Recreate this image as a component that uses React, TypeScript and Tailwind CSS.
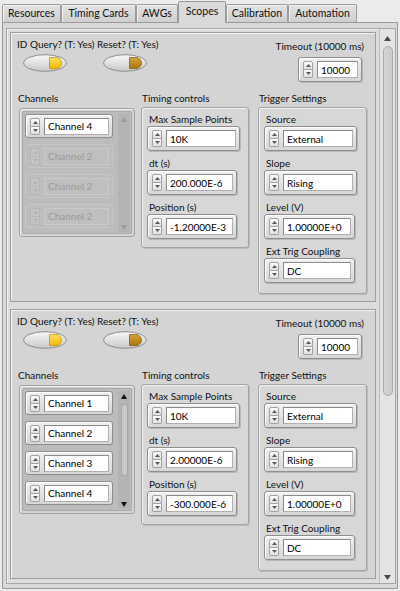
import React from "react";

function Tri({ dir, color, w = 5, h = 3 }: { dir: "up" | "down"; color: string; w?: number; h?: number }) {
  return (
    <svg width={w} height={h} viewBox={`0 0 ${w} ${h}`} className="block">
      <path d={dir === "up" ? `M${w / 2} 0L${w} ${h}H0Z` : `M0 0H${w}L${w / 2} ${h}Z`} fill={color} />
    </svg>
  );
}

function Spinner({ disabled = false }: { disabled?: boolean }) {
  const c = disabled ? "#b2b2b2" : "#5a5a5a";
  const btn = disabled
    ? "border-[#b6b6b6] bg-[#c4c4c4]"
    : "border-[#a2a2a2] bg-gradient-to-b from-[#fbfbfb] to-[#e0e0e0]";
  return (
    <div className="flex flex-col w-[10px] h-[17px] shrink-0">
      <div className={`flex-1 flex items-center justify-center border rounded-t-[2px] ${btn}`}>
        <Tri dir="up" color={c} />
      </div>
      <div className={`flex-1 flex items-center justify-center border border-t-0 rounded-b-[2px] ${btn}`}>
        <Tri dir="down" color={c} />
      </div>
    </div>
  );
}

function NumCtrl({
  value,
  w,
  h = "h-[25px]",
  disabled = false,
}: {
  value: string;
  w: string;
  h?: string;
  disabled?: boolean;
}) {
  return (
    <div
      className={`${w} ${h} shrink-0 flex items-center gap-[4px] pl-[4px] pr-[3px] rounded-[3px] border ${
        disabled
          ? "border-[#c6c6c6] bg-[#bdbdbd]"
          : "border-[#8e8e8e] bg-gradient-to-b from-[#f0f0f0] to-[#d6d6d6] shadow-[inset_1px_1px_0_#ffffff,1px_1px_0_#b8b8b8]"
      }`}
    >
      <Spinner disabled={disabled} />
      <div
        className={`flex-1 h-[17px] border flex items-center pl-[3px] leading-none whitespace-nowrap ${
          disabled
            ? "border-[#cacaca] bg-[#bfbfbf] text-[#9a9a9a]"
            : "border-[#b0b0b0] border-t-[#8a8a8a] border-l-[#8a8a8a] bg-white text-black"
        }`}
      >
        {value}
      </div>
    </div>
  );
}

function Led({ dark = false }: { dark?: boolean }) {
  const id = dark ? "ledDark" : "ledLight";
  return (
    <svg width="44" height="18" viewBox="0 0 44 18" className="block">
      <defs>
        <linearGradient id="ledBody" x1="0" y1="0" x2="0" y2="1">
          <stop offset="0" stopColor="#f8f8f8" />
          <stop offset="1" stopColor="#c9c9c9" />
        </linearGradient>
        <linearGradient id={id} x1="0" y1="0" x2="0" y2="1">
          {dark ? (
            <>
              <stop offset="0" stopColor="#d8a23a" />
              <stop offset="1" stopColor="#a8760e" />
            </>
          ) : (
            <>
              <stop offset="0" stopColor="#ffe060" />
              <stop offset="1" stopColor="#f5b800" />
            </>
          )}
        </linearGradient>
      </defs>
      <ellipse cx="22" cy="9" rx="21.3" ry="8.3" fill="url(#ledBody)" stroke="#8c8c8c" strokeWidth="1" />
      <path
        d="M26.5 3.5H32.5A6 5.5 0 0 1 32.5 14.5H26.5Z"
        fill={`url(#${id})`}
        stroke={dark ? "#8a6010" : "#c89400"}
        strokeWidth="0.8"
      />
    </svg>
  );
}

function Group({ children, w, pb }: { children: React.ReactNode; w: string; pb: string }) {
  return (
    <div
      className={`${w} ${pb} mt-[2px] rounded-[3px] border border-[#a4a4a4] bg-[#d7d7d7] shadow-[inset_1px_1px_0_#f2f2f2,1px_1px_0_#bcbcbc] pl-[5px] pt-[4px] flex flex-col`}
    >
      {children}
    </div>
  );
}

function Field({ label, children }: { label: string; children: React.ReactNode }) {
  return (
    <div className="flex flex-col mb-[5px] last:mb-0">
      <div className="leading-[14px] pl-[2px] text-[#111]">{label}</div>
      {children}
    </div>
  );
}

function ChannelArray({ enabled }: { enabled: boolean }) {
  const items = enabled
    ? ["Channel 1", "Channel 2", "Channel 3", "Channel 4"]
    : ["Channel 4", "Channel 2", "Channel 2", "Channel 2"];
  const arrow = enabled ? "#111111" : "#9c9c9c";
  return (
    <div className="w-[116px] h-[129px] mt-[3px] rounded-[3px] border border-[#a2a2a2] bg-[#d2d2d2] p-[2px] shadow-[inset_1px_1px_0_#efefef]">
      <div className="h-full bg-[#bcbcbc] border border-[#aaaaaa] rounded-[2px] flex pl-[2px] pt-[2px] pr-[1px]">
        <div className="flex flex-col gap-[6px] w-[88px]">
          {items.map((t, i) => (
            <NumCtrl key={i} value={t} w="w-[88px]" h="h-[24px]" disabled={!enabled && i > 0} />
          ))}
        </div>
        <div className="ml-auto w-[12px] h-[118px] flex flex-col items-center pt-[3px] pb-[2px] bg-[#b4b4b4]">
          <Tri dir="up" color={arrow} w={6} h={5} />
          {enabled ? (
            <div className="mt-[5px] w-[7px] h-[72px] rounded-[3px] border border-[#a6a6a6] bg-[#c9c9c9]" />
          ) : null}
          <div className="flex-1" />
          <Tri dir="down" color={arrow} w={6} h={5} />
        </div>
      </div>
    </div>
  );
}

function ScopePanel({ data }: { data: { enabled: boolean; dt: string; pos: string } }) {
  return (
    <div className="w-[366px] h-[270px] shrink-0 border border-[#9e9e9e] bg-[#d4d4d4] shadow-[inset_1px_1px_0_#f4f4f4] flex flex-col">
      <div className="h-[59px] flex justify-between">
        <div className="flex pl-[6px] pt-[5px]">
          <div className="w-[80px] flex flex-col">
            <div className="leading-[13px] whitespace-nowrap">ID Query? (T: Yes)</div>
            <div className="mt-[3px] pl-[6px]">
              <Led />
            </div>
          </div>
          <div className="flex flex-col">
            <div className="leading-[13px] whitespace-nowrap">Reset? (T: Yes)</div>
            <div className="mt-[3px] pl-[6px]">
              <Led dark />
            </div>
          </div>
        </div>
        <div className="flex flex-col items-end pt-[7px] pr-[11px]">
          <div className="leading-[13px] whitespace-nowrap">Timeout (10000 ms)</div>
          <div className="mt-[4px] mr-[2px]">
            <NumCtrl value="10000" w="w-[64px]" />
          </div>
        </div>
      </div>
      <div className="flex items-start pl-[8px]">
        <div className="w-[116px] flex flex-col">
          <div className="leading-[13px] -ml-[1px]">Channels</div>
          <ChannelArray enabled={data.enabled} />
        </div>
        <div className="ml-[6px] w-[108px] flex flex-col">
          <div className="leading-[13px] pl-[1px]">Timing controls</div>
          <Group w="w-[108px]" pb="pb-[8px]">
            <Field label="Max Sample Points">
              <NumCtrl value="10K" w="w-[93px]" />
            </Field>
            <Field label="dt (s)">
              <NumCtrl value={data.dt} w="w-[90px]" />
            </Field>
            <Field label="Position (s)">
              <NumCtrl value={data.pos} w="w-[90px]" />
            </Field>
          </Group>
        </div>
        <div className="ml-[9px] w-[109px] flex flex-col">
          <div className="leading-[13px] pl-[1px]">Trigger Settings</div>
          <Group w="w-[109px]" pb="pb-[10px]">
            <Field label="Source">
              <NumCtrl value="External" w="w-[93px]" />
            </Field>
            <Field label="Slope">
              <NumCtrl value="Rising" w="w-[93px]" />
            </Field>
            <Field label="Level (V)">
              <NumCtrl value="1.00000E+0" w="w-[91px]" />
            </Field>
            <Field label="Ext Trig Coupling">
              <NumCtrl value="DC" w="w-[91px]" />
            </Field>
          </Group>
        </div>
      </div>
    </div>
  );
}

const tabs: { name: string; w: string; sel?: boolean }[] = [
  { name: "Resources", w: "w-[59px]" },
  { name: "Timing Cards", w: "w-[75px]" },
  { name: "AWGs", w: "w-[42px]" },
  { name: "Scopes", w: "w-[48px]", sel: true },
  { name: "Calibration", w: "w-[62px]" },
  { name: "Automation", w: "w-[69px]" },
];

export default function App() {
  return (
    <div className="w-[400px] h-[591px] overflow-hidden bg-[#ebebeb] font-['Lato',sans-serif] text-[10px] text-[#111] flex flex-col">
      <div className="h-[22px] shrink-0 flex items-end pl-[2px] relative z-10">
        {tabs.map((t) =>
          t.sel ? (
            <div
              key={t.name}
              className={`${t.w} h-[22px] mb-[-1px] border border-b-0 border-[#9a9a9a] rounded-t-[2px] bg-[#dadada] flex items-center justify-center pb-[1px] text-[10.5px]`}
            >
              {t.name}
            </div>
          ) : (
            <div
              key={t.name}
              className={`${t.w} h-[18px] border border-b-0 border-[#9c9c9c] rounded-t-[2px] bg-gradient-to-b from-[#e2e2e2] to-[#cfcfcf] shadow-[inset_1px_1px_0_#f2f2f2] flex items-center justify-center text-[10.5px]`}
            >
              {t.name}
            </div>
          )
        )}
      </div>
      <div className="mx-[2px] h-[567px] shrink-0 border border-[#9a9a9a] bg-[#d9d9d9] pt-[5px] pl-[3px] pr-[1px] pb-[4px] flex">
        <div className="flex-1 flex border border-[#a6a6a6] bg-[#dcdcdc] shadow-[inset_1px_1px_0_#f0f0f0]">
          <div className="flex flex-col gap-[7px] pl-[3px] pt-[3px] overflow-hidden">
            <ScopePanel data={{ enabled: false, dt: "200.000E-6", pos: "-1.20000E-3" }} />
            <ScopePanel data={{ enabled: true, dt: "2.00000E-6", pos: "-300.000E-6" }} />
          </div>
          <div className="ml-auto w-[16px] flex flex-col items-center bg-[#e4e4e4] border-l border-[#bcbcbc] pt-[7px] pb-[3px]">
            <Tri dir="up" color="#4a4a4a" w={7} h={5} />
            <div className="mt-[5px] w-[10px] h-[350px] rounded-[5px] border border-[#ababab] bg-gradient-to-r from-[#d6d6d6] to-[#cacaca]" />
            <div className="flex-1" />
            <Tri dir="down" color="#4a4a4a" w={7} h={5} />
          </div>
        </div>
      </div>
    </div>
  );
}
